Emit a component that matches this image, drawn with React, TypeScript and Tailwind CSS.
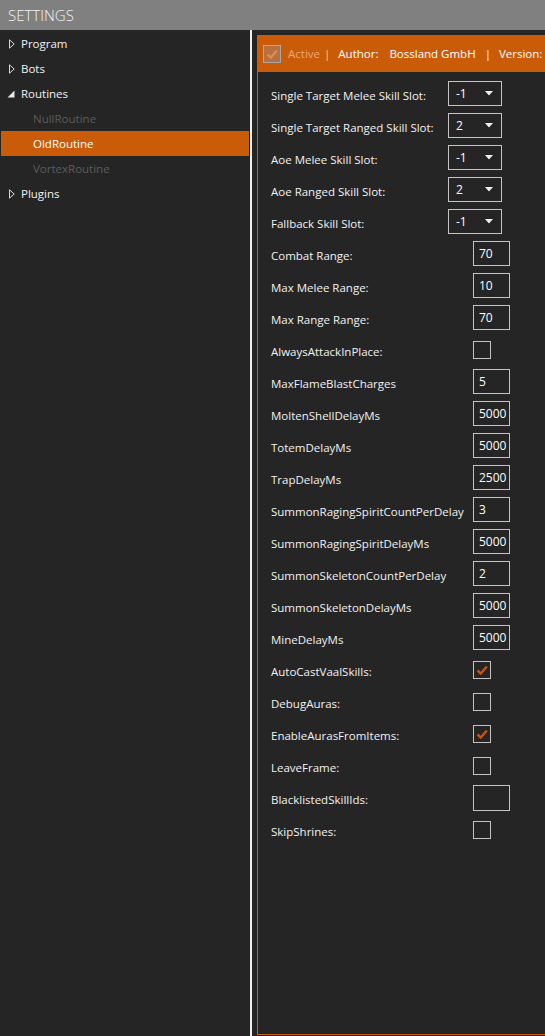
import React from "react";

type Row =
  | { label: string; kind: "combo"; value: string }
  | { label: string; kind: "text"; value: string }
  | { label: string; kind: "check"; checked: boolean };

const ROWS: Row[] = [
  { label: "Single Target Melee Skill Slot:", kind: "combo", value: "-1" },
  { label: "Single Target Ranged Skill Slot:", kind: "combo", value: "2" },
  { label: "Aoe Melee Skill Slot:", kind: "combo", value: "-1" },
  { label: "Aoe Ranged Skill Slot:", kind: "combo", value: "2" },
  { label: "Fallback Skill Slot:", kind: "combo", value: "-1" },
  { label: "Combat Range:", kind: "text", value: "70" },
  { label: "Max Melee Range:", kind: "text", value: "10" },
  { label: "Max Range Range:", kind: "text", value: "70" },
  { label: "AlwaysAttackInPlace:", kind: "check", checked: false },
  { label: "MaxFlameBlastCharges", kind: "text", value: "5" },
  { label: "MoltenShellDelayMs", kind: "text", value: "5000" },
  { label: "TotemDelayMs", kind: "text", value: "5000" },
  { label: "TrapDelayMs", kind: "text", value: "2500" },
  { label: "SummonRagingSpiritCountPerDelay", kind: "text", value: "3" },
  { label: "SummonRagingSpiritDelayMs", kind: "text", value: "5000" },
  { label: "SummonSkeletonCountPerDelay", kind: "text", value: "2" },
  { label: "SummonSkeletonDelayMs", kind: "text", value: "5000" },
  { label: "MineDelayMs", kind: "text", value: "5000" },
  { label: "AutoCastVaalSkills:", kind: "check", checked: true },
  { label: "DebugAuras:", kind: "check", checked: false },
  { label: "EnableAurasFromItems:", kind: "check", checked: true },
  { label: "LeaveFrame:", kind: "check", checked: false },
  { label: "BlacklistedSkillIds:", kind: "text", value: "" },
  { label: "SkipShrines:", kind: "check", checked: false },
];

const FONT = { fontFamily: '"Open Sans", "Liberation Sans", sans-serif' };

function Collapsed() {
  return (
    <svg width="6" height="10" viewBox="0 0 6 10" className="shrink-0">
      <path d="M0.5 0.8 L5.2 5 L0.5 9.2 Z" fill="none" stroke="#d8d8d8" strokeWidth="1" />
    </svg>
  );
}

function Expanded() {
  return (
    <svg width="8" height="8" viewBox="0 0 8 8" className="shrink-0">
      <path d="M7.5 0.5 L7.5 7.5 L0.5 7.5 Z" fill="#e8e8e8" />
    </svg>
  );
}

function Check({ color }: { color: string }) {
  return (
    <svg width="16" height="16" viewBox="0 0 16 16">
      <path d="M3.5 8.5 L6.8 11.5 L12.8 4.5" fill="none" stroke={color} strokeWidth="2.4" />
    </svg>
  );
}

function TreeItem({
  label,
  arrow,
  indent,
  tone = "normal",
}: {
  label: string;
  arrow?: "collapsed" | "expanded";
  indent?: boolean;
  tone?: "normal" | "dim" | "selected";
}) {
  return (
    <div
      className={
        "mx-px flex h-[25px] items-center text-[11.5px] " +
        (tone === "selected" ? "bg-[#ca5b09] text-white" : tone === "dim" ? "text-[#5c5c5c]" : "text-[#f2f2f2]")
      }
    >
      {indent ? (
        <span className="pl-[32px]">{label}</span>
      ) : (
        <>
          <span className="flex w-[20px] justify-end pr-[6px]">
            {arrow === "expanded" ? <Expanded /> : <Collapsed />}
          </span>
          <span>{label}</span>
        </>
      )}
    </div>
  );
}

function Control({ row }: { row: Row }) {
  if (row.kind === "combo") {
    return (
      <div className="flex h-[25px] w-[54px] items-center justify-between border border-[#c4c4c4] pl-[7px] pr-[8px] text-[12px] text-white">
        <span>{row.value}</span>
        <svg width="8" height="5" viewBox="0 0 8 5">
          <path d="M0 0 H8 L4 4.5 Z" fill="#f0f0f0" />
        </svg>
      </div>
    );
  }
  if (row.kind === "text") {
    const wide = row.value === "";
    return (
      <div
        className={
          "ml-[25px] flex w-[37px] items-center border border-[#c4c4c4] pl-[5px] text-[12px] text-white " +
          (wide ? "h-[26px]" : "h-[25px]")
        }
      >
        {row.value}
      </div>
    );
  }
  return (
    <div className="ml-[25px] flex h-[18px] w-[18px] items-center justify-center border border-[#c4c4c4]">
      {row.checked && <Check color="#c2560c" />}
    </div>
  );
}

export default function App() {
  return (
    <div className="flex h-[1036px] w-[545px] flex-col overflow-hidden bg-[#252525]" style={FONT}>
      <div className="flex h-[30px] shrink-0 items-center bg-[#808080] pl-[8px] text-[15px] font-light text-[#f4f4f4]">
        SETTINGS
      </div>
      <div className="flex min-h-0 flex-1">
        <div className="w-[250px] shrink-0 pt-px">
          <TreeItem label="Program" arrow="collapsed" />
          <TreeItem label="Bots" arrow="collapsed" />
          <TreeItem label="Routines" arrow="expanded" />
          <TreeItem label="NullRoutine" indent tone="dim" />
          <TreeItem label="OldRoutine" indent tone="selected" />
          <TreeItem label="VortexRoutine" indent tone="dim" />
          <TreeItem label="Plugins" arrow="collapsed" />
        </div>
        <div className="w-[2px] shrink-0 bg-[#f0f0f0]" />
        <div className="min-w-0 flex-1 overflow-hidden pl-[5px] pt-[5px] pb-px">
          <div className="flex h-full w-[330px] flex-col border border-[#ca5b09]">
            <div className="flex h-[36px] shrink-0 items-center whitespace-nowrap bg-[#ca5b09] pl-[5px] text-[11.5px] text-white">
              <div className="flex h-[18px] w-[18px] items-center justify-center border border-[#a8a8a8] bg-[#b7703f]">
                <Check color="#dc8d52" />
              </div>
              <span className="ml-[7px] text-[#eaa77a]">Active</span>
              <span className="ml-[4px] font-medium text-[#ffd24a]">|</span>
              <span className="ml-[8px] font-medium">Author:</span>
              <span className="ml-[11px] font-medium">Bossland GmbH</span>
              <span className="ml-[9px] font-medium">|</span>
              <span className="ml-[8px] font-medium">Version:</span>
            </div>
            <div className="flex flex-col gap-[7px] pl-[13px] pt-[9px]">
              {ROWS.map((row, i) => (
                <div key={i} className="flex h-[25px] items-center">
                  <span className="w-[177px] shrink-0 whitespace-nowrap pt-[4px] text-[11.5px] text-[#f2f2f2]">
                    {row.label}
                  </span>
                  <Control row={row} />
                </div>
              ))}
            </div>
          </div>
        </div>
      </div>
    </div>
  );
}
